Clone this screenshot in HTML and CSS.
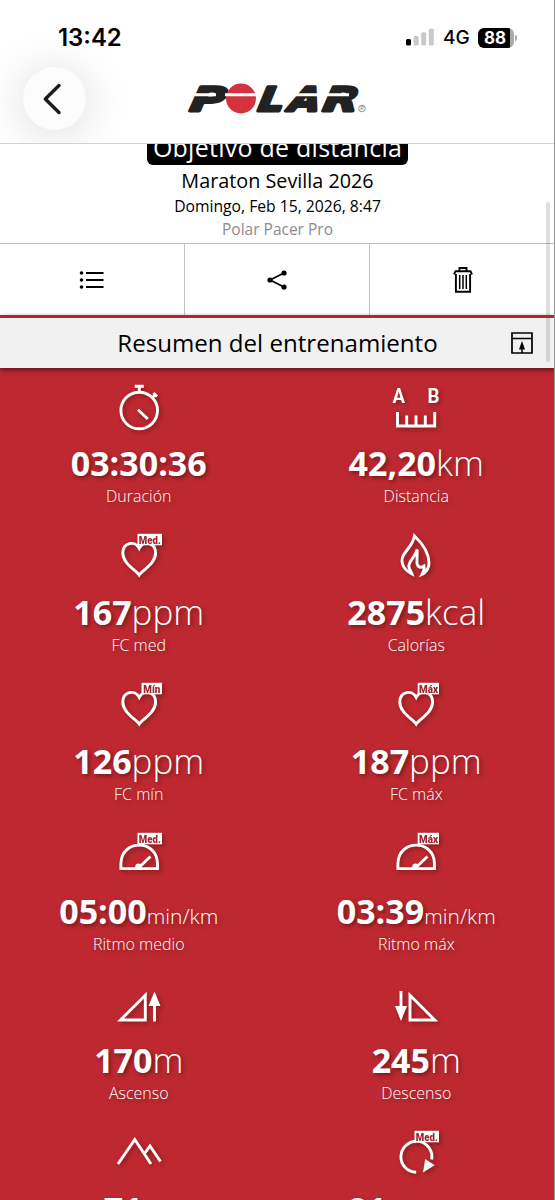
FILE: index.html
```html
<!DOCTYPE html>
<html lang="es">
<head>
<meta charset="utf-8">
<title>Polar</title>
<link rel="stylesheet" href="styles.css">
</head>
<body>
<div class="screen">
  <header class="top">
    <div class="status">
      <span class="time">13:42</span>
      <div class="indicators">
        <svg class="signal" width="28" height="18" viewBox="0 0 28 18"><rect x="0" y="11" width="5" height="6.5" rx="1.5"/><g fill="#c9c9c9"><rect x="7.7" y="8" width="5" height="9.5" rx="1.5"/><rect x="15.2" y="4.3" width="5" height="13.2" rx="1.5"/><rect x="22.8" y="0.5" width="5" height="17" rx="1.5"/></g></svg>
        <span class="net">4G</span>
        <span class="battery">88</span>
      </div>
    </div>
    <div class="bar">
      <button class="back"><svg width="20" height="32" viewBox="0 0 20 32"><path d="M17 2.500 3.300 16 17 29.500" fill="none" stroke="#1c1c1c" stroke-width="3.400" stroke-linecap="round" stroke-linejoin="round"/></svg></button>
      <svg class="logo" width="182" height="34" viewBox="0 0 182 34">
        <g class="logo-type">
          <text transform="translate(2 29.500) skewX(-10)" textLength="35" lengthAdjust="spacingAndGlyphs">P</text>
          <text transform="translate(70 29.500) skewX(-10)" textLength="26" lengthAdjust="spacingAndGlyphs">L</text>
          <text transform="translate(101 29.500) skewX(-10)" textLength="31" lengthAdjust="spacingAndGlyphs">A</text>
          <text transform="translate(135 29.500) skewX(-10)" textLength="35" lengthAdjust="spacingAndGlyphs">R</text>
        </g>
        <circle cx="54" cy="17.500" r="15" fill="#d5323f"/>
        <path d="M5 13.700H29M38 13.700H69M108 13.700H131M138 13.700H162" stroke="#fff" stroke-width="3"/>
        <circle cx="175" cy="27.500" r="3.300" fill="none" stroke="#777" stroke-width=".8"/>
        <text class="reg" x="173.200" y="29.400">R</text>
      </svg>
    </div>
  </header>

  <main>
    <section class="session">
      <span class="badge">Objetivo de distancia</span>
      <h1>Maraton Sevilla 2026</h1>
      <p class="date">Domingo, Feb 15, 2026, 8:47</p>
      <p class="device">Polar Pacer Pro</p>
    </section>
    <nav class="tools">
      <a><svg width="26" height="20" viewBox="0 0 26 20"><path d="M7 3H24.500M7 10H24.500M7 17H24.500" stroke="#000" stroke-width="1.800"/><circle cx="2.500" cy="3" r="1.800"/><circle cx="2.500" cy="10" r="1.800"/><circle cx="2.500" cy="17" r="1.800"/></svg></a>
      <a><svg width="20" height="20" viewBox="0 0 20 20"><path d="M17 3 3 10l14 7" fill="none" stroke="#000" stroke-width="1.700"/><circle cx="3" cy="10" r="2.600"/><circle cx="17" cy="3" r="2.600"/><circle cx="17" cy="17" r="2.600"/></svg></a>
      <a><svg width="20" height="28" viewBox="0 0 20 28" fill="none" stroke="#000"><path d="M6.500 5V2H13.500V5M1 8.300 2.500 5.300H17.500L19 8.300M2.900 8V25.700H17.100V8" stroke-width="1.900"/><path d="M6.700 9V23M10 9V23M13.300 9V23" stroke-width="1.500"/></svg></a>
    </nav>
    <section class="summary">
      <div class="summary-head">
        <h2>Resumen del entrenamiento</h2>
        <svg class="expand" width="22" height="22" viewBox="0 0 22 22"><path d="M1 1H21V21H1ZM1 6.500H21" fill="none" stroke="#000" stroke-width="1.700"/><path d="M11 9 14 17.500H8Z"/><path d="M11 15V21" stroke="#000" stroke-width="1.500"/></svg>
      </div>
      <div class="grid">
        <div class="metric">
          <svg class="icon" viewBox="0 0 60 55"><circle cx="30.200" cy="35.500" r="18.300"/><path d="M25.700 11.300H34.800M30.300 11V17M43.500 22.500 46.500 19.500M44.500 18 48 21.500M29 34.700 38.800 44"/></svg>
          <div class="value"><b>03:30:36</b></div><div class="label">Duración</div>
        </div>
        <div class="metric">
          <svg class="icon" viewBox="0 0 60 55"><path d="M11.500 37V51H48.700V37M20.700 40.500V51M30 40.500V51M39.300 40.500V51"/><text class="ab" x="6.500" y="28" textLength="12.500" lengthAdjust="spacingAndGlyphs">A</text><text class="ab" x="41.500" y="28" textLength="12" lengthAdjust="spacingAndGlyphs">B</text></svg>
          <div class="value"><b>42,20</b>km</div><div class="label">Distancia</div>
        </div>
        <div class="metric">
          <svg class="icon" viewBox="0 0 60 55"><path d="M30.200 51C27 46 13.800 40 13.800 29 13.800 18.500 26 16 30.200 24.300 34.400 16 46.600 18.500 46.600 29 46.600 40 33.400 46 30.200 51Z"/><rect class="tag" x="28.500" y="9.800" width="24.500" height="11.500"/><text class="tag-text" x="29.800" y="19.700" textLength="22" lengthAdjust="spacingAndGlyphs">Med.</text></svg>
          <div class="value"><b>167</b>ppm</div><div class="label">FC med</div>
        </div>
        <div class="metric">
          <svg class="icon" viewBox="0 0 60 55"><path class="flame" d="M26 50C18 46 14 39 17 32 20 26 27 21 28.500 12 37 20 43 30 43 39 43 44 40 49 36 50.500 38 47 38.500 44 38 42 33.500 45 30.500 42 31 37 31 32 31.500 28 31 25.500 29 34 21.500 38 23 43 23.500 46 25 47 26 50Z"/></svg>
          <div class="value"><b>2875</b>kcal</div><div class="label">Calorías</div>
        </div>
        <div class="metric">
          <svg class="icon" viewBox="0 0 60 55"><path d="M30.200 51C27 46 13.800 40 13.800 29 13.800 18.500 26 16 30.200 24.300 34.400 16 46.600 18.500 46.600 29 46.600 40 33.400 46 30.200 51Z"/><rect class="tag" x="32.500" y="9.800" width="20.500" height="11.500"/><text class="tag-text" x="34.300" y="19.700" textLength="17" lengthAdjust="spacingAndGlyphs">Mín</text></svg>
          <div class="value"><b>126</b>ppm</div><div class="label">FC mín</div>
        </div>
        <div class="metric">
          <svg class="icon" viewBox="0 0 60 55"><path d="M30.200 51C27 46 13.800 40 13.800 29 13.800 18.500 26 16 30.200 24.300 34.400 16 46.600 18.500 46.600 29 46.600 40 33.400 46 30.200 51Z"/><rect class="tag" x="31.700" y="9.800" width="21.300" height="11.500"/><text class="tag-text" x="33" y="19.700" textLength="19" lengthAdjust="spacingAndGlyphs">Máx</text></svg>
          <div class="value"><b>187</b>ppm</div><div class="label">FC máx</div>
        </div>
        <div class="metric">
          <svg class="icon" viewBox="0 0 60 55"><path d="M11.900 45.600V41C11.900 15.800 48.500 15.800 48.500 41V45.600ZM30 44.500 41.500 33.500"/><circle class="solid" cx="29.500" cy="43.800" r="3.200"/><rect class="tag" x="28.500" y="9.800" width="24.500" height="11.500"/><text class="tag-text" x="29.800" y="19.700" textLength="22" lengthAdjust="spacingAndGlyphs">Med.</text></svg>
          <div class="value"><b>05:00</b><small>min/km</small></div><div class="label">Ritmo medio</div>
        </div>
        <div class="metric">
          <svg class="icon" viewBox="0 0 60 55"><path d="M11.900 45.600V41C11.900 15.800 48.500 15.800 48.500 41V45.600ZM30 44.500 41.500 33.500"/><circle class="solid" cx="29.500" cy="43.800" r="3.200"/><rect class="tag" x="31.700" y="9.800" width="21.300" height="11.500"/><text class="tag-text" x="33" y="19.700" textLength="19" lengthAdjust="spacingAndGlyphs">Máx</text></svg>
          <div class="value"><b>03:39</b><small>min/km</small></div><div class="label">Ritmo máx</div>
        </div>
        <div class="metric">
          <svg class="icon" viewBox="0 0 60 55"><path d="M11.500 48H36.300V23.200ZM45.500 49.500V30"/><path class="solid" d="M45.500 19.500 51.500 34H39.500Z"/></svg>
          <div class="value"><b>170</b>m</div><div class="label">Ascenso</div>
        </div>
        <div class="metric">
          <svg class="icon" viewBox="0 0 60 55"><path d="M24 48H48.800L24 23.200ZM15 19V38"/><path class="solid" d="M15 49 9 34H21Z"/></svg>
          <div class="value"><b>245</b>m</div><div class="label">Descenso</div>
        </div>
        <div class="metric">
          <svg class="icon" viewBox="0 0 60 55"><path d="M9 43 25.800 18.500 42 43M35.500 32.500 41 25 51.500 40.500"/></svg>
          <div class="value"><b>71</b>m</div><div class="label">Altitud máx</div>
        </div>
        <div class="metric">
          <svg class="icon" viewBox="0 0 60 55"><path d="M30.200 51.300A15.500 15.500 0 1 1 45.700 38.500"/><path class="solid" d="M37 51.500 39.200 38 48.700 44.300Z"/><rect class="tag" x="28.500" y="9.800" width="24.500" height="11.500"/><text class="tag-text" x="29.800" y="19.700" textLength="22" lengthAdjust="spacingAndGlyphs">Med.</text></svg>
          <div class="value"><b>81</b><small>pasos/min</small></div><div class="label">Cadencia med</div>
        </div>
      </div>
    </section>
  </main>
  <i class="scrollbar"></i>
</div>
</body>
</html>
```
FILE: styles.css
```css
* { box-sizing: border-box; }
body { margin: 0; background: #fff; color: #000; font-family: "Open Sans", "Noto Sans", sans-serif; }
h1, h2, p { margin: 0; font-weight: 400; }
.screen { position: relative; height: 1200px; overflow: hidden; display: flex; flex-direction: column; border-right: 1px solid #949494; }
.screen > main { width: 555px; }

.top { height: 144px; flex: none; border-bottom: 1px solid #d2d2d2; overflow: hidden; font-family: Inter, sans-serif; }
.status { height: 67px; padding: 8px 40px 0 58px; display: flex; align-items: center; justify-content: space-between; }
.time { font-size: 23.900px; font-weight: 600; line-height: 28px; }
.indicators { display: flex; align-items: center; }
.signal { margin-top: -1px; }
.net { font-size: 19px; font-weight: 500; margin-left: 9px; width: 35px; }
.battery { position: relative; width: 36px; height: 20px; border-radius: 6px; background: linear-gradient(90deg, #000 88%, #aaa 88%); color: #fff; font-size: 17px; font-weight: 700; line-height: 20px; text-align: center; padding-right: 2px; }
.battery::after { content: ""; position: absolute; right: -3px; top: 7px; width: 2px; height: 6px; border-radius: 0 2px 2px 0; background: #aaa; }
.bar { display: flex; align-items: flex-start; padding-left: 23px; }
.back { width: 63px; height: 63px; border: 0; padding: 0 6px 0 0; border-radius: 50%; background: #fcfcfc; box-shadow: 0 4px 44px 4px rgba(0,0,0,.12); display: flex; align-items: center; justify-content: center; }
.logo { margin: 14px 0 0 101px; overflow: visible; }
.logo-type { font: italic 700 33.500px "DejaVu Sans", sans-serif; fill: #222; stroke: #222; stroke-width: 2.800; stroke-linejoin: round; }
.reg { font: 5px "Liberation Sans", sans-serif; fill: #777; }

.session { height: 99px; overflow: hidden; display: flex; flex-direction: column; align-items: center; text-align: center; }
.badge { flex: none; margin-top: -17px; height: 38px; line-height: 40px; padding: 0 6px; border-radius: 6px; background: #000; color: #fff; font-size: 25px; letter-spacing: .25px; }
.session h1 { font-size: 19.800px; line-height: 28px; margin-top: 2px; }
.date { font-size: 15.700px; line-height: 23px; }
.device { font-size: 15.500px; line-height: 23px; color: #8c8c8c; }

.tools { display: grid; grid-template-columns: repeat(3, 1fr); height: 72px; border-top: 1px solid #bdbec2; }
.tools a { display: flex; align-items: center; justify-content: center; }
.tools a:not(:last-child) { border-right: 1px solid #c0c2c6; }

.summary-head { position: relative; z-index: 1; height: 53px; display: flex; align-items: center; justify-content: center; border-top: 3px solid #ae2630; background: #f1f1f1; box-shadow: 0 2px 5px rgba(0,0,0,.5); }
.summary-head h2 { font-size: 24.100px; line-height: 52px; }
.expand { position: absolute; right: 22px; top: 14px; }
.grid { display: grid; grid-template-columns: 1fr 1fr; grid-auto-rows: 149.200px; background: #be2830; color: #fff; }
.metric { display: flex; flex-direction: column; align-items: center; padding-top: 7px; }
.icon { display: block; width: 60px; height: 55px; overflow: visible; fill: none; stroke: #fff; stroke-width: 2.900; filter: drop-shadow(2px 2px 2px rgba(0,0,0,.3)); }
.icon .solid, .icon .tag { fill: #fff; stroke: none; }
.icon .flame { stroke-width: 2.900; stroke-linejoin: miter; }
.icon text { stroke: none; font-family: Roboto, sans-serif; font-weight: 700; }
.icon .ab { font-size: 20.500px; fill: #fff; }
.icon .tag-text { font-size: 11.500px; font-weight: 900; fill: #9e2530; }
.value { height: 48px; line-height: 48px; margin-top: 9px; font-size: 35px; font-weight: 300; white-space: nowrap; text-shadow: 2px 2px 4px rgba(0,0,0,.4); }
.value b { font-size: 34px; font-weight: 700; }
.value small { font-size: 21px; }
.label { font-size: 16px; line-height: 20px; margin-top: -1px; font-weight: 300; text-shadow: 2px 2px 4px rgba(0,0,0,.3); }
.scrollbar { position: absolute; z-index: 2; left: 546px; top: 202px; width: 4px; height: 160px; border-radius: 2px; background: rgba(90,90,90,.2); }
```
